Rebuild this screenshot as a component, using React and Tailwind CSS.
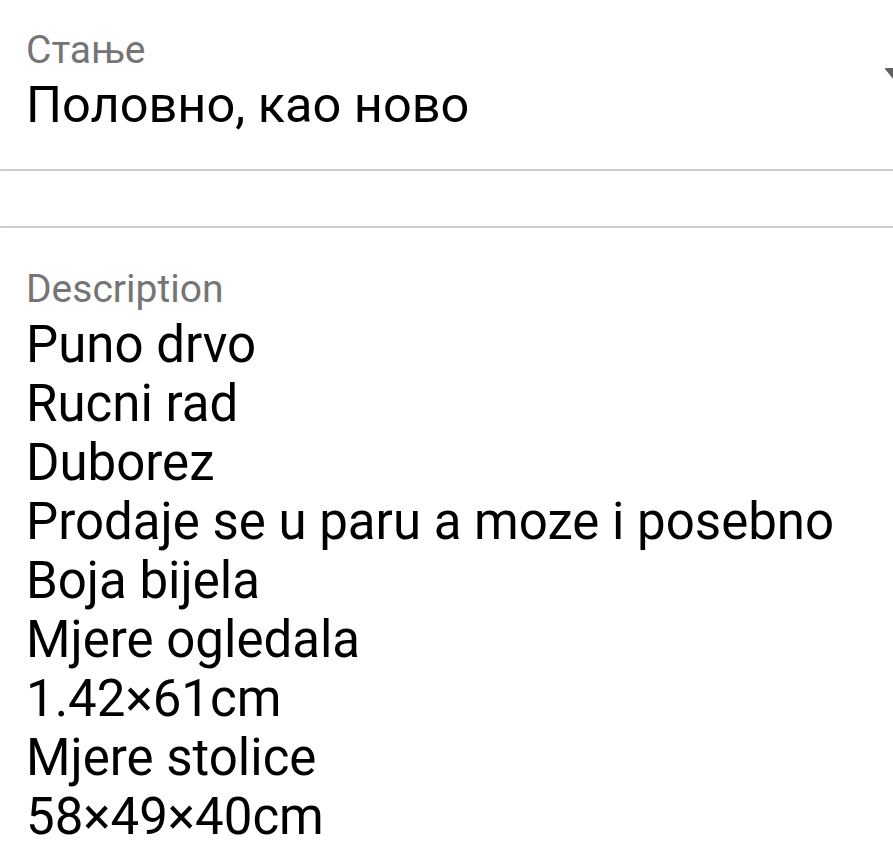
import { useState } from 'react'

const lines = [
  'Puno drvo',
  'Rucni rad',
  'Duborez',
  'Prodaje se u paru a moze i posebno',
  'Boja bijela',
  'Mjere ogledala',
  '1.42×61cm',
  'Mjere stolice',
  '58×49×40cm',
]

function Field({ label, children, dropdown }) {
  return (
    <div className="relative px-[26px]">
      <div className="text-[39px] leading-[44px] text-[#757575]">{label}</div>
      {children}
      {dropdown && (
        <svg
          className="absolute top-[38px] left-[883px]"
          width="24"
          height="16"
          viewBox="0 0 24 16"
        >
          <path d="M3 2 H21 Q23 2 21.6 3.6 L13.4 13.4 Q12 15 10.6 13.4 L2.4 3.6 Q1 2 3 2 Z" fill="#5f6063" />
        </svg>
      )}
    </div>
  )
}

export default function App() {
  const [condition] = useState('Половно, као ново')

  return (
    <div
      className="w-[893px] h-[864px] overflow-hidden bg-white text-black"
      style={{ fontFamily: 'Roboto, "Noto Sans", sans-serif' }}
    >
      <div className="pt-[28px]">
        <Field label="Стање" dropdown>
          <div className="mt-[4px] text-[50.5px] leading-[58px]">{condition}</div>
        </Field>
      </div>

      <div className="mt-[35px] h-[2px] bg-[#cdcdcd] rounded-l-full" />
      <div className="mt-[55px] h-[2px] bg-[#cdcdcd] rounded-l-full" />

      <div className="pt-[39px]">
        <Field label="Description">
          <div className="mt-[4px] text-[51px] leading-[59px]">
            {lines.map((l) => (
              <div key={l}>{l}</div>
            ))}
          </div>
        </Field>
      </div>
    </div>
  )
}
